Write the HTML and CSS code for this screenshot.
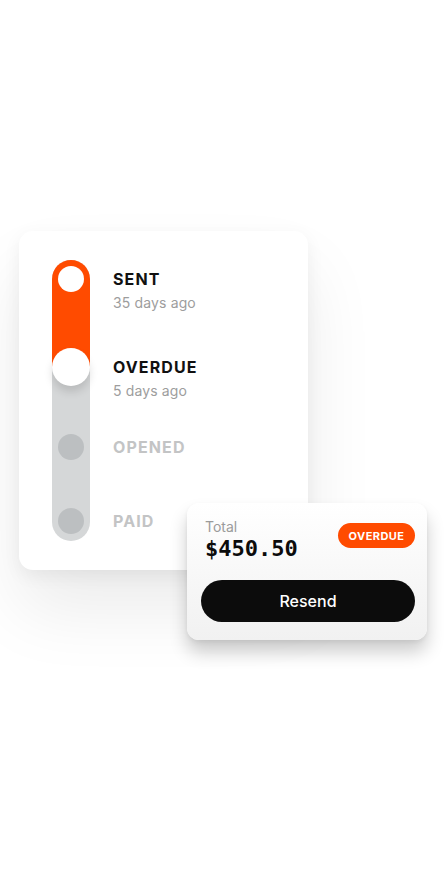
FILE: index.html
```html
<!DOCTYPE html>
<html lang="en">
<head>
<meta charset="utf-8">
<title>Invoice status</title>
<link rel="stylesheet" href="styles.css">
</head>
<body>
<div class="scene">
  <div class="status-card">
    <div class="timeline">
      <div class="track"><div class="track-fill"></div></div>
      <div class="step step-sent">
        <div class="dot-cell"><span class="dot dot-done"></span></div>
        <div class="step-text">
          <div class="step-title">SENT</div>
          <div class="step-sub">35 days ago</div>
        </div>
      </div>
      <div class="step step-overdue">
        <div class="dot-cell"><span class="dot dot-current"></span></div>
        <div class="step-text">
          <div class="step-title">OVERDUE</div>
          <div class="step-sub">5 days ago</div>
        </div>
      </div>
      <div class="step step-opened">
        <div class="dot-cell"><span class="dot dot-todo"></span></div>
        <div class="step-text">
          <div class="step-title muted">OPENED</div>
        </div>
      </div>
      <div class="step step-paid">
        <div class="dot-cell"><span class="dot dot-todo"></span></div>
        <div class="step-text">
          <div class="step-title muted">PAID</div>
        </div>
      </div>
    </div>
  </div>

  <div class="total-card">
    <div class="total-head">
      <div class="total-info">
        <div class="total-label">Total</div>
        <div class="total-amount">$450.50</div>
      </div>
      <span class="badge">OVERDUE</span>
    </div>
    <button class="resend">Resend</button>
  </div>
</div>
</body>
</html>
```

FILE: styles.css
```css
* { box-sizing: border-box; }

html, body {
  margin: 0;
  padding: 0;
  background: #ffffff;
}

body {
  font-family: Inter, "Noto Sans", sans-serif;
  color: #111111;
}

.scene {
  position: relative;
  width: 446px;
  height: 872px;
  padding: 231px 0 0 19px;
  overflow: hidden;
}

.status-card {
  width: 289px;
  height: 339px;
  background: #ffffff;
  border-radius: 14px;
  padding: 29px 0 0 33px;
  box-shadow: 0 40px 70px rgba(0, 0, 0, 0.08), 0 6px 18px rgba(0, 0, 0, 0.06);
}

.timeline {
  position: relative;
  height: 281px;
}

.track {
  position: absolute;
  left: 0;
  top: 0;
  width: 38px;
  height: 281px;
  border-radius: 19px;
  background: #d5d7d8;
  overflow: hidden;
}

.track-fill {
  height: 107px;
  background: #ff4b00;
}

.step {
  position: relative;
  display: grid;
  grid-template-columns: 38px 1fr;
  column-gap: 23px;
  align-items: start;
}

.step-sent { height: 88px; }
.step-overdue { height: 80px; }
.step-opened { height: 74px; }
.step-paid { height: 38px; }

.dot-cell {
  height: 38px;
  display: flex;
  align-items: center;
  justify-content: center;
}

.dot {
  display: block;
  border-radius: 50%;
}

.dot-done {
  width: 26px;
  height: 26px;
  background: #ffffff;
}

.dot-current {
  width: 38px;
  height: 38px;
  background: #ffffff;
  box-shadow: 0 6px 9px rgba(0, 0, 0, 0.13);
}

.dot-todo {
  width: 26px;
  height: 26px;
  background: #bcbfc1;
}

.step-text {
  padding-top: 9px;
}

.step-title {
  font-size: 16px;
  line-height: 20px;
  font-weight: 700;
  letter-spacing: 0.07em;
  color: #111111;
}

.step-title.muted {
  color: #c3c4c5;
}

.step-sub {
  margin-top: 5px;
  font-size: 14px;
  line-height: 18px;
  color: #9d9d9d;
  letter-spacing: 0.01em;
}

.total-card {
  position: absolute;
  left: 187px;
  top: 503px;
  width: 240px;
  height: 137px;
  border-radius: 12px;
  background: linear-gradient(180deg, #ffffff 0%, #f1f1f1 100%);
  padding: 15px 12px 18px 14px;
  box-shadow: 0 12px 18px rgba(0, 0, 0, 0.2), 0 2px 4px rgba(0, 0, 0, 0.06);
}

.total-head {
  display: flex;
  justify-content: space-between;
  align-items: flex-start;
}

.total-info {
  padding-left: 4px;
}

.total-label {
  font-size: 14px;
  line-height: 18px;
  color: #9b9b9b;
}

.total-amount {
  font-family: "DejaVu Sans Mono", monospace;
  font-weight: 700;
  font-size: 22px;
  line-height: 26px;
  color: #0c0c0c;
}

.badge {
  margin-top: 5px;
  width: 77px;
  height: 25px;
  border-radius: 13px;
  background: #ff4b00;
  color: #ffffff;
  font-size: 11px;
  font-weight: 700;
  letter-spacing: 0.04em;
  display: flex;
  align-items: center;
  justify-content: center;
}

.resend {
  display: block;
  width: 100%;
  height: 42px;
  margin-top: 18px;
  border: none;
  border-radius: 21px;
  background: #0c0c0c;
  color: #ffffff;
  font-family: Inter, "Noto Sans", sans-serif;
  font-size: 16px;
  font-weight: 500;
  cursor: pointer;
}
```
